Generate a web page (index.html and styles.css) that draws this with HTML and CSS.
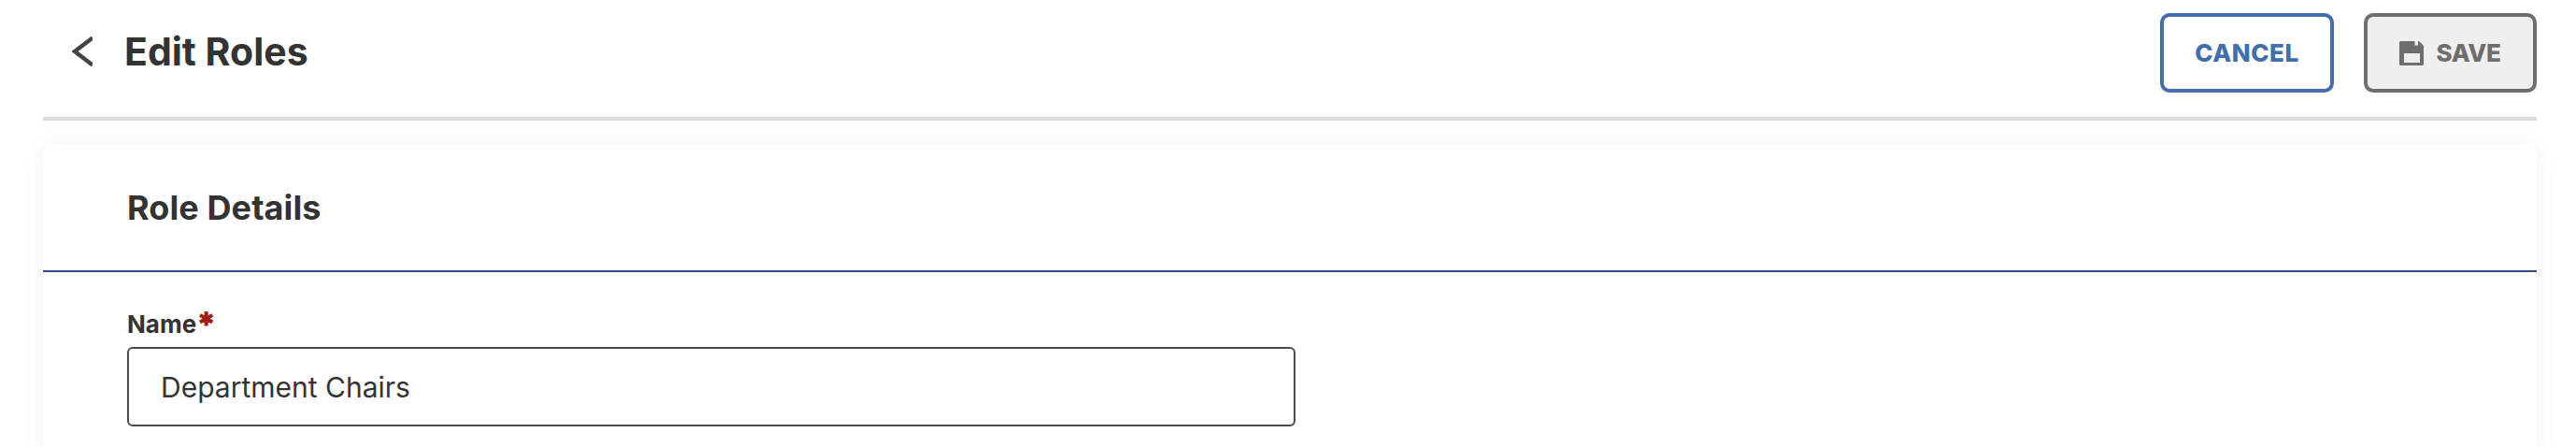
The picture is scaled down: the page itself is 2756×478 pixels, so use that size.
FILE: index.html
```html
<!DOCTYPE html>
<html lang="en">
<head>
<meta charset="utf-8">
<title>Edit Roles</title>
<link rel="stylesheet" href="styles.css">
</head>
<body>
<div class="page">
  <header class="topbar">
    <div class="title-group">
      <svg class="back-icon" viewBox="0 0 22 32" aria-hidden="true"><path d="M22 1.500 L3 16 L22 30.500" fill="none" stroke="#444" stroke-width="4.400"/></svg>
      <h1 class="title">Edit Roles</h1>
    </div>
    <div class="actions">
      <button class="btn btn-cancel" type="button">CANCEL</button>
      <button class="btn btn-save" type="button">
        <svg class="save-icon" viewBox="0 0 26 26" aria-hidden="true"><path fill-rule="evenodd" d="M1.500 0H16.500v4.500h3.500V0h1l5 5v19.500a1.500 1.500 0 0 1-1.500 1.500h-23A1.500 1.500 0 0 1 0 24.500v-23A1.500 1.500 0 0 1 1.500 0ZM5 13v10h17V13Z" fill="#6e6e6e"/></svg>
        <span class="save-label">SAVE</span>
      </button>
    </div>
  </header>
  <section class="card">
    <div class="card-head"><h2 class="card-title">Role Details</h2></div>
    <div class="card-body">
      <label class="field-label" for="name">Name<span class="req">✱</span></label>
      <input class="field-input" id="name" type="text" value="Department Chairs">
    </div>
  </section>
</div>
</body>
</html>
```

FILE: styles.css
```css
* { box-sizing: border-box; }
html, body { margin: 0; height: 100%; background: #fff; overflow: hidden; }
body { font-family: Inter, "Liberation Sans", sans-serif; color: #333; }
.page { padding: 0 42px 0 46px; }
.topbar {
  height: 129px;
  padding-top: 14px;
  padding-bottom: 26px;
  border-bottom: 4px solid #dddddd;
  display: flex;
  justify-content: space-between;
  align-items: center;
}
.title-group { display: flex; align-items: center; margin-left: 31px; gap: 34px; padding-bottom: 3px; }
.back-icon { width: 22px; height: 32px; display: block; }
.title { margin: 0; font-size: 41px; line-height: 48px; font-weight: 700; color: #333; }
.actions { display: flex; gap: 32px; }
.btn {
  height: 85px;
  border-radius: 10px;
  border: 4px solid;
  font-family: inherit;
  font-size: 26px;
  font-weight: 800;
  letter-spacing: 0.5px;
  display: flex;
  align-items: center;
  justify-content: center;
  padding: 0;
}
.btn-cancel { width: 186px; background: #fff; border-color: #436ea9; color: #436ea9; }
.btn-save { width: 185px; gap: 13px; background: #efefef; border-color: #6e6e6e; color: #6e6e6e; }
.save-label { letter-spacing: -0.3px; }
.save-icon { width: 26px; height: 26px; display: block; }
.card {
  margin-top: 26px;
  background: #fff;
  border-radius: 12px 12px 0 0;
  box-shadow: 0 0 24px rgba(0, 0, 0, 0.06);
  height: 340px;
}
.card-head {
  height: 136px;
  border-bottom: 2px solid #2c5080;
  padding-left: 90px;
  display: flex;
  align-items: center;
}
.card-title { margin: 0; font-size: 36px; line-height: 44px; font-weight: 700; color: #333; letter-spacing: 0.1px; }
.card-body { padding: 36px 0 0 90px; }
.field-label { display: flex; font-size: 26px; line-height: 36px; font-weight: 700; color: #333; margin-bottom: 8px; padding-top: 2px; height: 36px; }
.req { color: #a01c10; margin-left: 2px; font-family: "DejaVu Sans", sans-serif; font-size: 20px; line-height: 24px; font-weight: 700; -webkit-text-stroke: 0.8px #a01c10; }
.field-input {
  display: block;
  width: 1250px;
  height: 85px;
  border: 2px solid #4a4a4a;
  border-radius: 6px;
  padding: 0 34px;
  font-family: inherit;
  font-size: 30px;
  color: #333;
  background: #fff;
  outline: none;
}
```
